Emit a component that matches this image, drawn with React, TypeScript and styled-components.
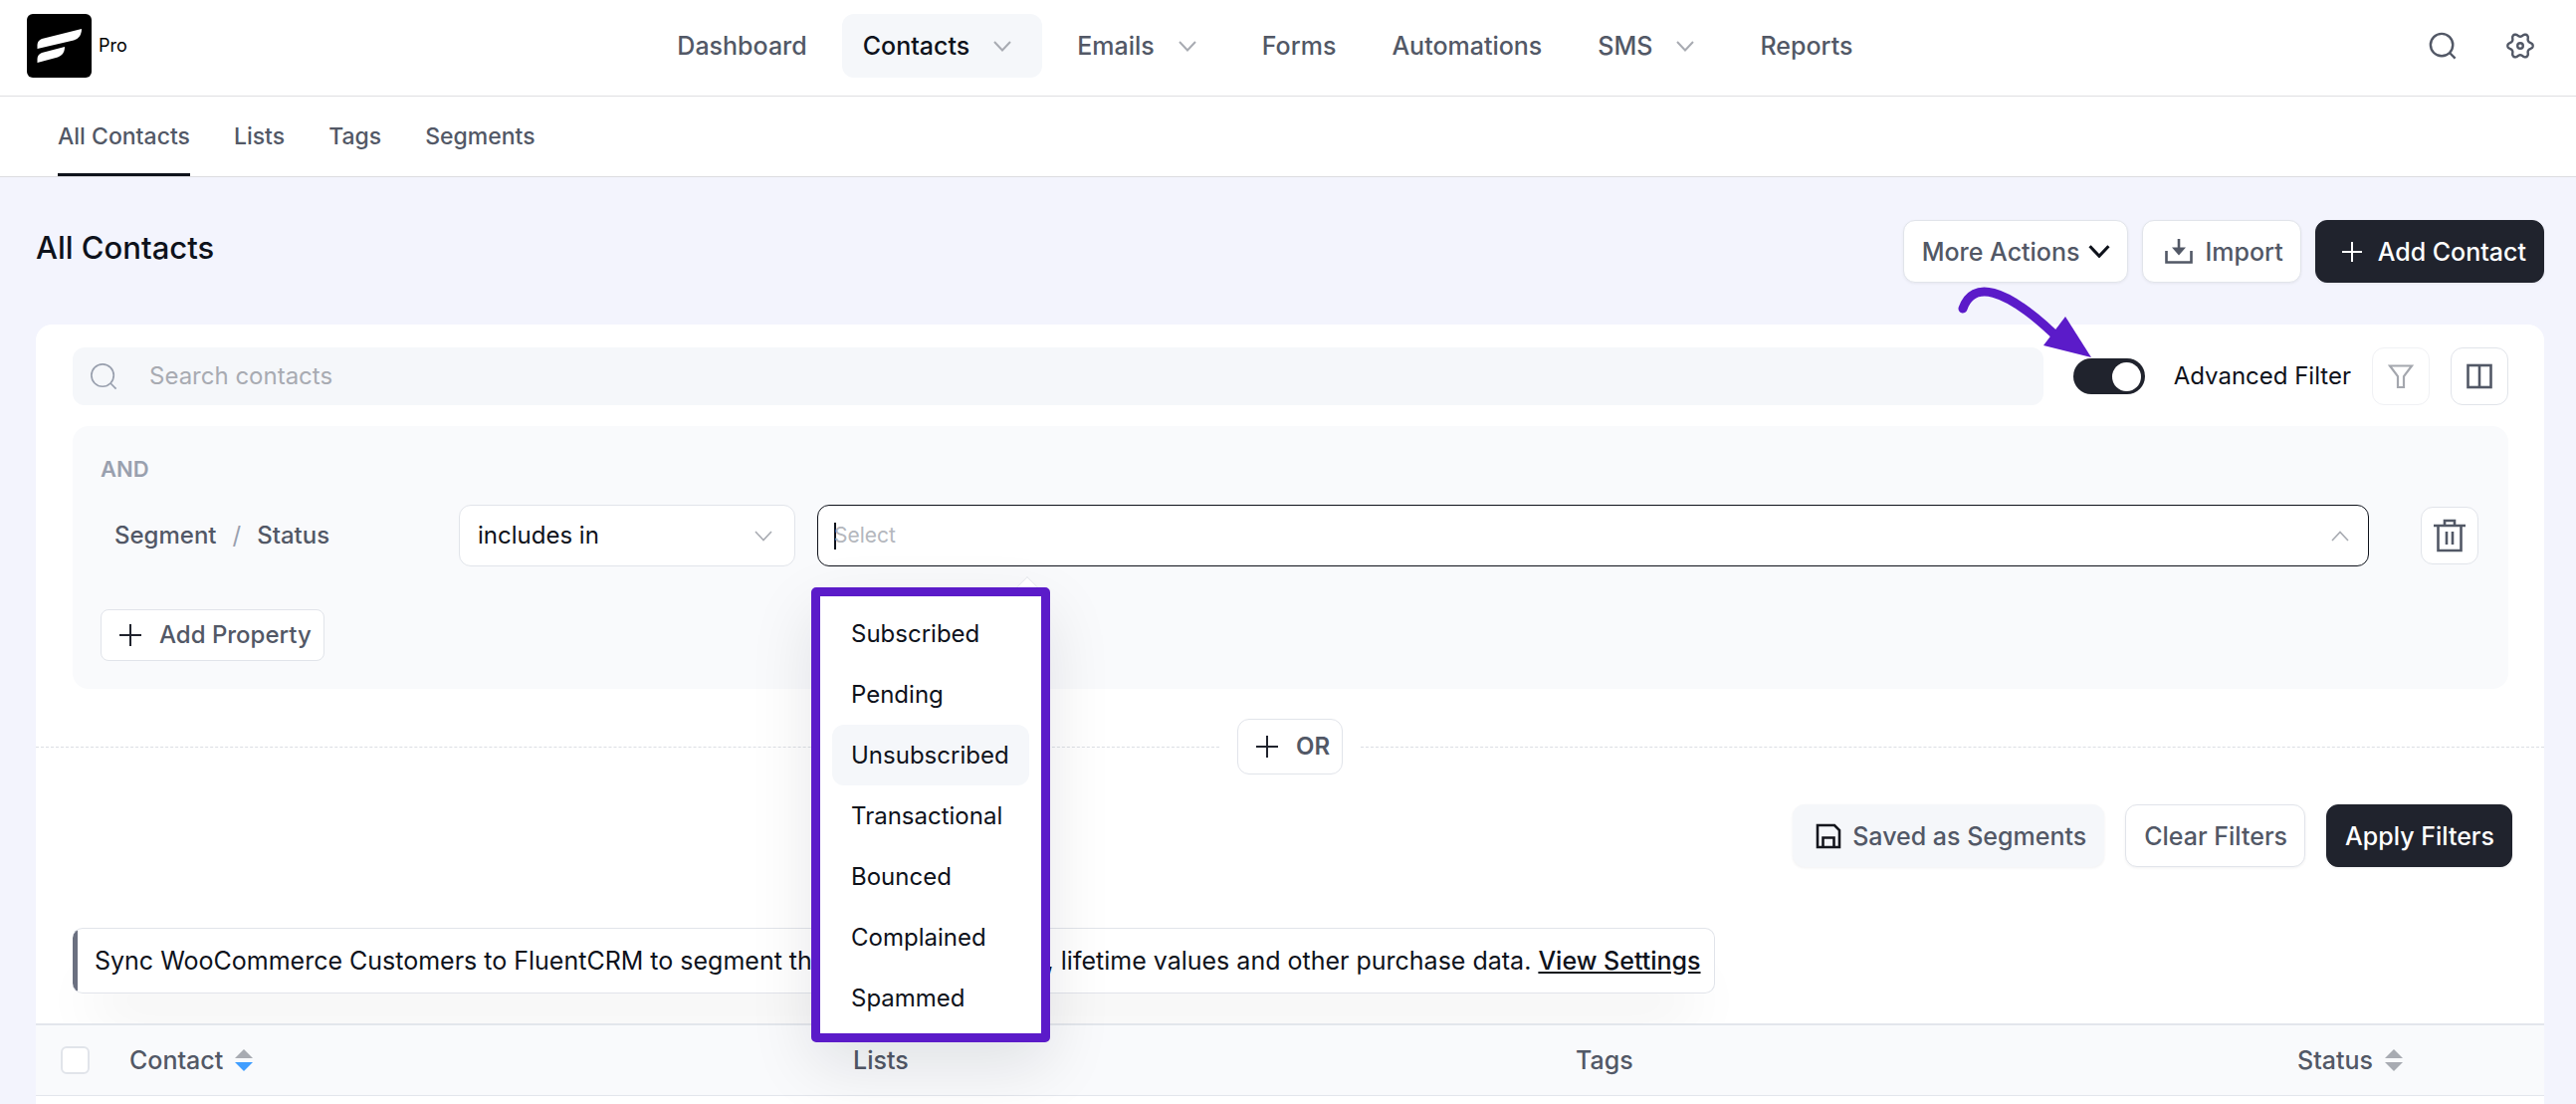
import React, { useState } from "react";
import styled, { createGlobalStyle, css } from "styled-components";

const GlobalStyle = createGlobalStyle`
  *, *::before, *::after { box-sizing: border-box; }
  body {
    margin: 0;
    background: #f3f4fd;
    color: #0e121b;
    font-family: Inter, "Liberation Sans", sans-serif;
    font-size: 24px;
    line-height: 32px;
    overflow-x: hidden;
  }
  button, input, select { font: inherit; color: inherit; margin: 0; }
  button { cursor: pointer; }
  svg { display: block; flex: none; }
`;

const INK = "#525866";
const LINE = "#e1e4ea";
const ACCENT = "#5b1bc9";

/* ---------- header ---------- */

const TopBar = styled.header`
  display: flex;
  justify-content: space-between;
  align-items: center;
  height: 97px;
  padding: 0 42px 4px 27px;
  background: #fff;
  border-bottom: 1px solid #dfdfe1;
`;

const Brand = styled.a`
  display: flex;
  align-items: center;
  gap: 7px;
  color: #000;
  font-size: 18px;
  line-height: 24px;
  text-decoration: none;
`;

const MainNav = styled.nav`
  display: flex;
  gap: 14px;
`;

const NavLink = styled.a<{ $active?: boolean }>`
  display: flex;
  align-items: center;
  gap: 24px;
  height: 64px;
  padding: 0 21px;
  border-radius: 12px;
  background: ${(p) => (p.$active ? "#f5f7fa" : "transparent")};
  color: ${(p) => (p.$active ? "#0e121b" : INK)};
  font-size: 25px;
  font-weight: 500;
  text-decoration: none;
  svg { margin-right: 10px; color: #a8abb2; }
`;

const TopTools = styled.div`
  display: flex;
  gap: 50px;
  padding-left: 26px;
`;

const BareButton = styled.button`
  display: flex;
  padding: 0;
  border: 0;
  background: none;
  color: ${INK};
`;

const SubNav = styled.nav`
  display: flex;
  gap: 44px;
  height: 81px;
  padding: 0 58px;
  background: #fff;
  border-bottom: 1px solid #dcdce0;
`;

const SubLink = styled.a<{ $active?: boolean }>`
  display: flex;
  align-items: center;
  padding-top: 3px;
  border-bottom: 3px solid ${(p) => (p.$active ? "#0e121b" : "transparent")};
  color: ${INK};
  font-size: 23px;
  font-weight: 500;
  text-decoration: none;
`;

/* ---------- page ---------- */

const Page = styled.main`
  padding: 43px 32px 0 36px;
`;

const TitleRow = styled.div`
  display: flex;
  justify-content: space-between;
  align-items: flex-start;
  margin-bottom: 42px;
`;

const Title = styled.h1`
  margin: 0;
  padding-top: 8px;
  font-size: 31px;
  line-height: 40px;
  font-weight: 500;
`;

const Actions = styled.div`
  display: flex;
  gap: 14px;
`;

const Button = styled.button<{ $kind?: "dark" | "soft"; $lead?: number; $gap?: number }>`
  display: flex;
  align-items: center;
  justify-content: center;
  gap: ${(p) => p.$gap ?? 12}px;
  height: 63px;
  padding: 0 17px 0 ${(p) => p.$lead ?? 18}px;
  border: 1px solid ${LINE};
  border-radius: 12px;
  background: #fff;
  color: ${INK};
  font-size: 25px;
  font-weight: 500;
  white-space: nowrap;
  box-shadow: 0 1px 3px rgba(14, 18, 27, 0.06);
  ${(p) =>
    p.$kind === "dark" &&
    css`
      background: #20232d;
      border-color: #20232d;
      color: #fff;
    `}
  ${(p) =>
    p.$kind === "soft" &&
    css`
      background: #f5f7fa;
      border-color: #f5f7fa;
    `}
`;

const Card = styled.section`
  background: #fff;
  border-radius: 16px 16px 0 0;
  padding-top: 23px;
`;

const SearchRow = styled.div`
  display: flex;
  align-items: center;
  padding: 0 36px 0 37px;
`;

const SearchBox = styled.label`
  flex: 1;
  display: flex;
  align-items: center;
  gap: 32px;
  height: 58px;
  padding: 0 17px;
  border-radius: 12px;
  background: #f5f7fa;
  color: #99a0ae;
`;

const SearchInput = styled.input`
  flex: 1;
  border: 0;
  outline: 0;
  padding: 0;
  background: none;
  &::placeholder { color: #a8abb2; opacity: 1; }
`;

const SwitchLabel = styled.label`
  position: relative;
  display: flex;
  align-items: center;
  gap: 29px;
  margin: 0 21px 0 30px;
`;

const Switch = styled.input`
  appearance: none;
  display: flex;
  align-items: center;
  width: 72px;
  height: 36px;
  padding: 0 4px;
  border-radius: 18px;
  background: #c8ccd4;
  &::before {
    content: "";
    width: 29px;
    height: 29px;
    border-radius: 50%;
    background: #fff;
  }
  &:checked { background: #20232d; justify-content: flex-end; }
`;

const Arrow = styled.svg`
  position: absolute;
  z-index: 3;
  top: -77px;
  left: -120px;
  pointer-events: none;
`;

const IconButton = styled.button<{ $faded?: boolean }>`
  display: flex;
  align-items: center;
  justify-content: center;
  width: 58px;
  height: 58px;
  padding: 0;
  border: 1px solid ${(p) => (p.$faded ? "#f0f1f4" : LINE)};
  border-radius: 12px;
  background: #fff;
  color: ${(p) => (p.$faded ? "#a4a7ae" : INK)};
  & + & { margin-left: 21px; }
`;

const FilterGroup = styled.div`
  margin: 21px 36px 0 37px;
  padding: 29px 30px 28px 28px;
  border-radius: 16px;
  background: #f9fafc;
`;

const GroupLabel = styled.div`
  color: #99a0ae;
  font-size: 22px;
  line-height: 28px;
  font-weight: 600;
`;

const Rule = styled.div`
  display: flex;
  align-items: center;
  margin: 22px 0 43px;
`;

const RuleName = styled.div`
  width: 345px;
  margin-right: 15px;
  padding-left: 14px;
  color: ${INK};
  font-weight: 500;
  span { margin: 0 16px; color: #99a0ae; font-weight: 400; }
`;

const OperatorWrap = styled.div`
  display: grid;
  align-items: center;
  width: 338px;
  margin-right: 22px;
  > * { grid-area: 1 / 1; }
  svg { justify-self: end; margin-right: 22px; color: #a8abb2; pointer-events: none; }
`;

const Operator = styled.select`
  appearance: none;
  width: 100%;
  height: 62px;
  padding: 0 18px;
  border: 1px solid ${LINE};
  border-radius: 12px;
  background: #fff;
`;

const ValueWrap = styled.div`
  position: relative;
  flex: 1;
  display: flex;
  align-items: center;
  height: 62px;
  margin-right: 52px;
  padding: 0 18px 0 16px;
  border: 1px solid #0e121b;
  border-radius: 12px;
  background: #fff;
  > svg { color: #a8abb2; }
`;

const Caret = styled.span`
  width: 2px;
  height: 27px;
  margin-right: -2px;
  background: #0e121b;
`;

const ValueInput = styled.input`
  flex: 1;
  border: 0;
  outline: 0;
  padding: 0;
  background: none;
  font-size: 21px;
  &::placeholder { color: #b4b7bd; opacity: 1; }
`;

const Dropdown = styled.div`
  position: absolute;
  z-index: 2;
  top: 82px;
  left: -7px;
  width: 240px;
  padding: 7px 12px 5px;
  border: 9px solid ${ACCENT};
  border-radius: 5px;
  background: #fff;
  box-shadow: 0 24px 64px rgba(14, 18, 27, 0.1);
`;

const DropdownTip = styled.span`
  position: absolute;
  top: -17px;
  right: 6px;
  width: 16px;
  height: 16px;
  transform: rotate(45deg);
  border: 1px solid ${LINE};
  border-right: 0;
  border-bottom: 0;
  background: #fff;
  clip-path: polygon(0 0, 100% 0, 0 100%);
`;

const OptionList = styled.ul`
  margin: 0;
  padding: 0;
  list-style: none;
`;

const Option = styled.li<{ $hover?: boolean }>`
  height: 61px;
  padding: 0 19px;
  border-radius: 12px;
  background: ${(p) => (p.$hover ? "#f5f7fa" : "#fff")};
  line-height: 61px;
  white-space: nowrap;
`;

const SmallButton = styled(Button)`
  gap: 17px;
  height: 52px;
  padding: 0 12px 0 17px;
  border-radius: 8px;
  font-size: 24px;
  box-shadow: none;
  svg { color: #20232d; }
`;

const OrRow = styled.div`
  display: flex;
  align-items: center;
  gap: 18px;
  margin-top: 30px;
  &::before, &::after {
    content: "";
    flex: 1;
    border-top: 1px dashed #dcdfe4;
  }
`;

const OrButton = styled(SmallButton)`
  height: 56px;
  border-radius: 12px;
  font-weight: 600;
`;

const FilterActions = styled.div`
  display: flex;
  justify-content: flex-end;
  gap: 21px;
  margin-top: 30px;
  padding-right: 32px;
`;

const Notice = styled.div`
  width: fit-content;
  margin: 61px 0 0 37px;
  padding: 16px 13px 16px 22px;
  border: 1px solid ${LINE};
  border-left: 0;
  border-radius: 10px;
  background: linear-gradient(to right, #6b7080 5px, #fff 5px);
  font-size: 25px;
  box-shadow: 0 40px 60px -20px rgba(14, 18, 27, 0.09);
  a { color: inherit; font-weight: 500; }
`;

const Table = styled.table`
  position: relative;
  width: 100%;
  margin-top: 30px;
  border-collapse: separate;
  border-spacing: 0;
  table-layout: fixed;
`;

const HeadCell = styled.th<{ $w?: string }>`
  width: ${(p) => p.$w ?? "auto"};
  height: 73px;
  padding: 0;
  border: 0 solid #e3e6ec;
  border-width: 2px 0 1px;
  background: #f9fafc;
  color: ${INK};
  font-size: 25px;
  font-weight: 500;
  text-align: left;
`;

const EmptyCell = styled.td`
  height: 24px;
`;

const Sortable = styled.button`
  display: flex;
  align-items: center;
  gap: 12px;
  padding: 0;
  border: 0;
  background: none;
  font-weight: 500;
`;

const Check = styled.input`
  appearance: none;
  display: block;
  width: 29px;
  height: 28px;
  margin-left: 25px;
  border: 2px solid ${LINE};
  border-radius: 6px;
  background: #fff;
`;

/* ---------- icons ---------- */

const Chevron = ({ w = 18, h = 11, sw = 2, up = false, color = "currentColor" }) => (
  <svg width={w} height={h} viewBox="0 0 18 11" fill="none" stroke={color} strokeWidth={sw}>
    <path d={up ? "M1 10L9 1.5L17 10" : "M1 1L9 9.5L17 1"} />
  </svg>
);

const Magnifier = ({ sw = 2.6 }) => (
  <svg width="28" height="28" viewBox="0 0 30 30" fill="none" stroke="currentColor" strokeWidth={sw}>
    <circle cx="14" cy="14" r="12" />
    <path d="M22.5 22.5L28.5 28.5" />
  </svg>
);

const Plus = () => (
  <svg width="24" height="24" viewBox="0 0 24 24" fill="none" stroke="currentColor" strokeWidth="2">
    <path d="M12 1V23M1 12H23" />
  </svg>
);

const gearOutline =
  "M" +
  Array.from({ length: 72 }, (_, i) => {
    const a = (i * Math.PI) / 36;
    const wave = Math.cos(6 * a);
    const r = 11 + 1.7 * Math.sign(wave) * Math.pow(Math.abs(wave), 0.7);
    return `${(14 + r * Math.cos(a)).toFixed(2)} ${(14 + r * Math.sin(a)).toFixed(2)}`;
  }).join("L") +
  "Z";

const Gear = () => (
  <svg width="28" height="28" viewBox="0 0 28 28" fill="none" stroke="currentColor" strokeWidth="2.4" strokeLinejoin="round">
    <path d={gearOutline} />
    <circle cx="14" cy="14" r="2.8" />
  </svg>
);

const Sort = ({ down = "#a8abb2" }) => (
  <svg width="18" height="22" viewBox="0 0 18 22">
    <path d="M9 0L18 9H0Z" fill="#a8abb2" />
    <path d="M9 22L18 13H0Z" fill={down} />
  </svg>
);

const nav = [
  { text: "Dashboard" },
  { text: "Contacts", menu: true },
  { text: "Emails", menu: true },
  { text: "Forms" },
  { text: "Automations" },
  { text: "SMS", menu: true },
  { text: "Reports" },
];

const statuses = ["Subscribed", "Pending", "Unsubscribed", "Transactional", "Bounced", "Complained", "Spammed"];

export default function App() {
  const [advanced, setAdvanced] = useState(true);
  return (
    <>
      <GlobalStyle />
      <TopBar>
        <Brand href="#">
          <svg width="65" height="64" viewBox="0 0 65 64">
            <rect width="65" height="64" rx="6" />
            <path fill="#fff" d="M10.500 35V31C10.500 28 12.500 26 15 25L55 15C55 21 52 25 47 26.500Z" />
            <path fill="#fff" d="M10.500 49V45C10.500 42 12.500 40 15 39L38 33C38 39 35 42 31 43.500Z" />
          </svg>
          Pro
        </Brand>
        <MainNav>
          {nav.map((n) => (
            <NavLink key={n.text} href="#" $active={n.text === "Contacts"}>
              {n.text}
              {n.menu && <Chevron />}
            </NavLink>
          ))}
        </MainNav>
        <TopTools>
          <BareButton aria-label="Search"><Magnifier /></BareButton>
          <BareButton aria-label="Settings"><Gear /></BareButton>
        </TopTools>
      </TopBar>
      <SubNav>
        <SubLink href="#" $active>All Contacts</SubLink>
        <SubLink href="#">Lists</SubLink>
        <SubLink href="#">Tags</SubLink>
        <SubLink href="#">Segments</SubLink>
      </SubNav>

      <Page>
        <TitleRow>
          <Title>All Contacts</Title>
          <Actions>
            <Button $gap={9}>
              More Actions <Chevron w={22} h={13} sw={2.6} color="#0e121b" />
            </Button>
            <Button $lead={22}>
              <svg width="28" height="25" viewBox="0 0 28 25" fill="none" stroke="currentColor" strokeWidth="2.6">
                <path d="M1.500 12V23.500H26.500V12M14 0V12" />
                <path d="M7 8.500H21L14 16.500Z" fill="currentColor" stroke="none" />
              </svg>
              Import
            </Button>
            <Button $kind="dark" $lead={24} $gap={14}>
              <svg width="24" height="24" viewBox="0 0 24 24" stroke="currentColor" strokeWidth="2">
                <path d="M12 2V22M2 12H22" />
              </svg>
              Add Contact
            </Button>
          </Actions>
        </TitleRow>

        <Card>
          <SearchRow>
            <SearchBox>
              <Magnifier sw={1.8} />
              <SearchInput placeholder="Search contacts" aria-label="Search contacts" />
            </SearchBox>
            <SwitchLabel>
              <Switch type="checkbox" role="switch" checked={advanced} onChange={() => setAdvanced(!advanced)} />
              Advanced Filter
              <Arrow width="140" height="80" viewBox="0 0 140 80">
                <path d="M9 27C19 -2 51 6 100 52" fill="none" stroke={ACCENT} strokeWidth="9" strokeLinecap="round" />
                <path d="M112 35L138 76L90 64Z" fill={ACCENT} />
              </Arrow>
            </SwitchLabel>
            <IconButton aria-label="Filter" $faded>
              <svg width="26" height="26" viewBox="0 0 26 26" fill="none" stroke="currentColor" strokeWidth="2.2">
                <path d="M2 2.500H24L16 13V24H10V13Z" />
              </svg>
            </IconButton>
            <IconButton aria-label="Columns">
              <svg width="26" height="26" viewBox="0 0 26 26" fill="none" stroke="currentColor" strokeWidth="2.6">
                <rect x="1.500" y="2" width="23" height="22" />
                <path d="M13 2V24" />
              </svg>
            </IconButton>
          </SearchRow>

          <FilterGroup>
            <GroupLabel>AND</GroupLabel>
            <Rule>
              <RuleName>Segment<span>/</span>Status</RuleName>
              <OperatorWrap>
                <Operator aria-label="Operator"><option>includes in</option></Operator>
                <Chevron w={20} sw={1.6} />
              </OperatorWrap>
              <ValueWrap>
                <Caret />
                <ValueInput placeholder="Select" aria-label="Status value" />
                <Chevron w={20} sw={1.6} up />
                <Dropdown>
                  <DropdownTip />
                  <OptionList>
                    {statuses.map((s) => (
                      <Option key={s} $hover={s === "Unsubscribed"}>{s}</Option>
                    ))}
                  </OptionList>
                </Dropdown>
              </ValueWrap>
              <IconButton aria-label="Delete">
                <svg width="32" height="34" viewBox="0 0 32 34" fill="none" stroke="currentColor" strokeWidth="2.6">
                  <path d="M0 7H32M4.500 7V32H27.500V7M11 7V2H21V7M13 13V26M19 13V26" />
                </svg>
              </IconButton>
            </Rule>
            <SmallButton><Plus /> Add Property</SmallButton>
          </FilterGroup>

          <OrRow>
            <OrButton><Plus /> OR</OrButton>
          </OrRow>

          <FilterActions>
            <Button $kind="soft" $lead={22} $gap={11}>
              <svg width="26" height="26" viewBox="0 0 26 26" fill="none" stroke="#14161d" strokeWidth="2.6">
                <path d="M2 2H19L24 7V24H2ZM7.500 24V14.500H18.500V24" />
              </svg>
              Saved as Segments
            </Button>
            <Button>Clear Filters</Button>
            <Button $kind="dark">Apply Filters</Button>
          </FilterActions>

          <Notice>
            Sync WooCommerce Customers to FluentCRM to segment them by all purchases, lifetime values and other purchase data. <a href="#">View Settings</a>
          </Notice>

          <Table>
            <thead>
              <tr>
                <HeadCell $w="94px"><Check type="checkbox" aria-label="Select all contacts" /></HeadCell>
                <HeadCell $w="727px"><Sortable>Contact <Sort down="#409eff" /></Sortable></HeadCell>
                <HeadCell $w="726px">Lists</HeadCell>
                <HeadCell $w="725px">Tags</HeadCell>
                <HeadCell><Sortable>Status <Sort /></Sortable></HeadCell>
              </tr>
            </thead>
            <tbody>
              <tr><EmptyCell colSpan={5} /></tr>
            </tbody>
          </Table>
        </Card>
      </Page>
    </>
  );
}
